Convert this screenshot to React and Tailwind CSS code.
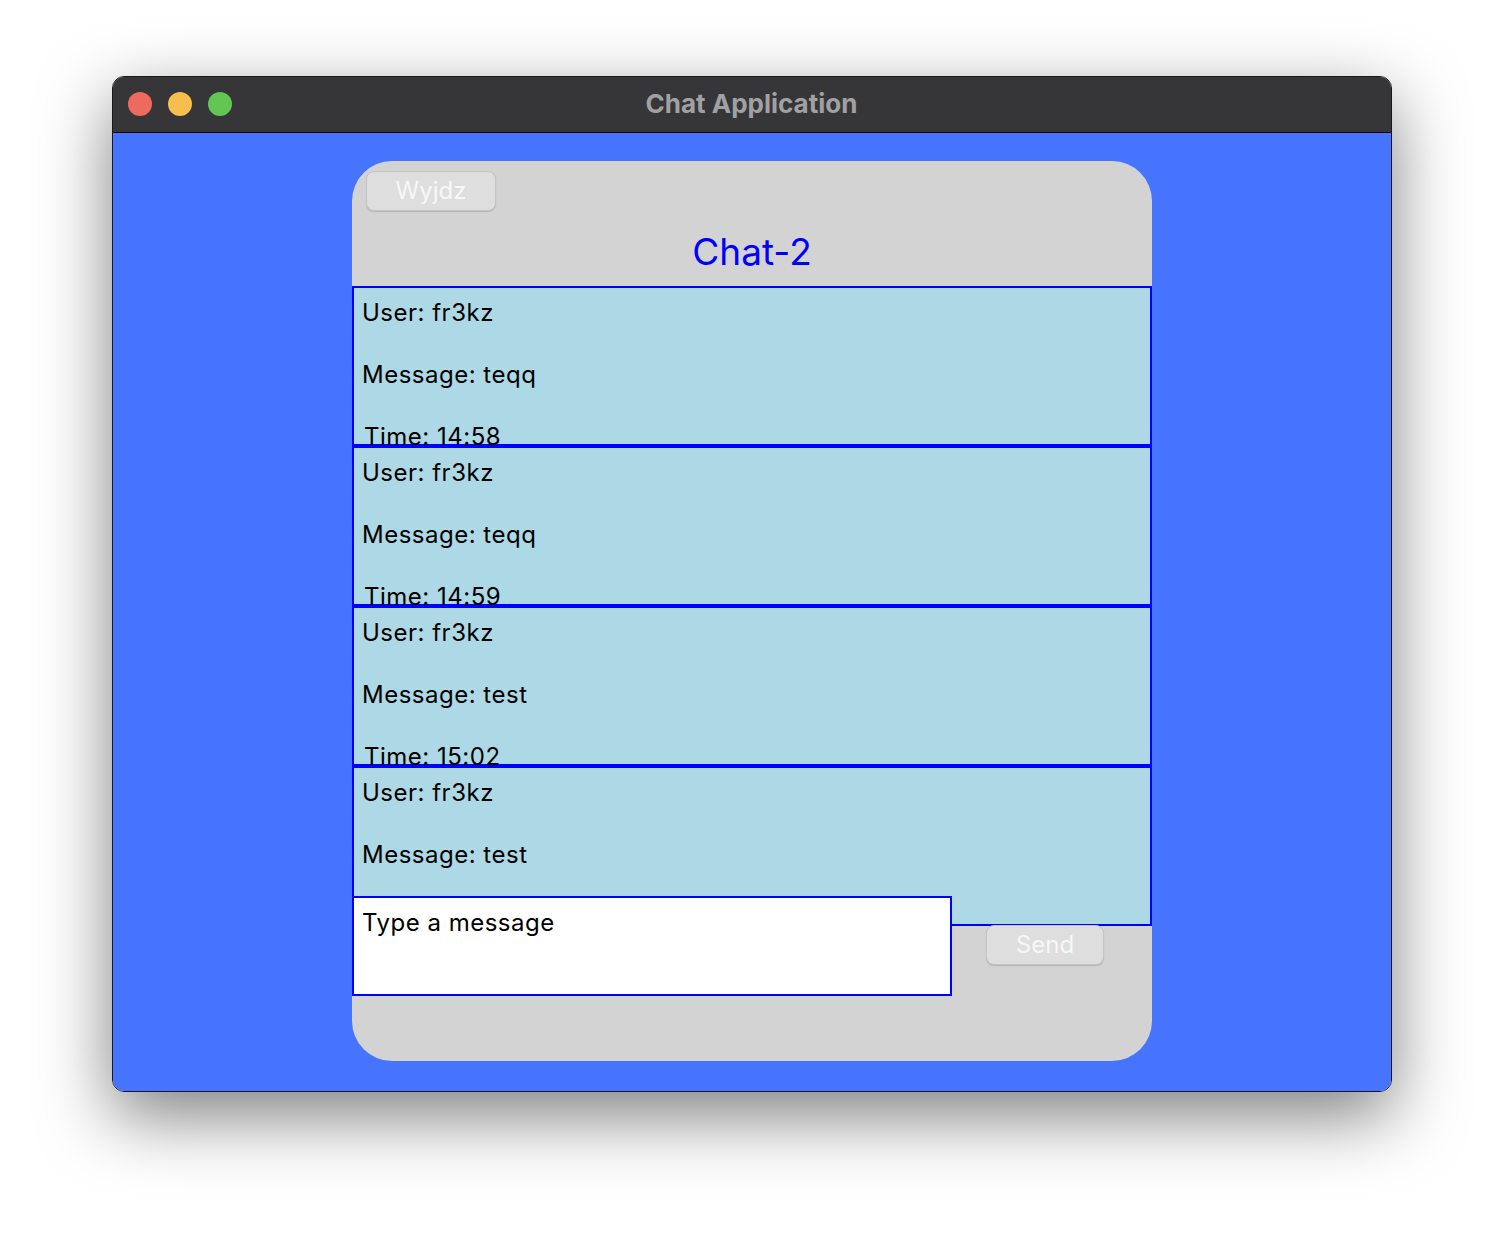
import React from "react";

const messages = [
  { user: "fr3kz", text: "teqq", time: "14:58" },
  { user: "fr3kz", text: "teqq", time: "14:59" },
  { user: "fr3kz", text: "test", time: "15:02" },
  { user: "fr3kz", text: "test" },
];

export default function App() {
  return (
    <div className="w-[1504px] h-[1240px] bg-white pt-[76px] pl-[112px] font-['Inter',sans-serif]">
      <div className="w-[1280px] h-[1016px] rounded-[12px] overflow-hidden border border-[#1a1a1a] shadow-[0_24px_70px_rgba(0,0,0,0.5)] flex flex-col">
        {/* title bar */}
        <div className="h-[56px] bg-[#363638] border-b border-black flex items-center relative shrink-0">
          <div className="flex items-center gap-[16px] pl-[15px] pb-[2px]">
            <span className="w-[24px] h-[24px] rounded-full bg-[#ee6a5f]" />
            <span className="w-[24px] h-[24px] rounded-full bg-[#f5be4f]" />
            <span className="w-[24px] h-[24px] rounded-full bg-[#62c554]" />
          </div>
          <div className="flex-1 text-center pr-[120px] pb-[3px] text-[26px] font-bold text-[#a1a1a3]">
            Chat Application
          </div>
        </div>

        {/* content */}
        <div className="flex-1 bg-[#4674ff] pt-[28px]">
          <div className="w-[800px] h-[900px] mx-auto rounded-[40px] bg-[#d3d3d3] flex flex-col">
            <div className="pl-[14px] pt-[10px]">
              <button className="w-[130px] h-[40px] rounded-[8px] bg-[#dedede] border border-[#c4c4c4] shadow-[0_1px_1px_rgba(0,0,0,0.15)] text-[24px] text-[#f7f7f7]">
                Wyjdz
              </button>
            </div>
            <h1 className="h-[75px] flex items-center justify-center pt-[6px] text-[37px] text-[#0000ff]">
              Chat-2
            </h1>

            <div className="flex flex-col">
              {messages.map((m, i) => (
                <div
                  key={i}
                  className="relative h-[160px] border-2 border-[#0000ff] bg-[#add8e6] px-[8px] pt-[10px] flex flex-col gap-[33px] text-[24px] leading-[29px] tracking-[0.5px] text-black"
                >
                  <p>User: {m.user}</p>
                  <p>Message: {m.text}</p>
                  {m.time && <p className="pl-[2px]">Time: {m.time}</p>}
                </div>
              ))}
            </div>

            <div className="relative -mt-[30px] flex items-start">
              <div className="w-[600px] h-[100px] bg-white border-2 border-[#0000ff] px-[8px] pt-[10px] text-[24px] leading-[29px] tracking-[0.5px] text-black">
                Type a message
              </div>
              <button className="ml-[34px] mt-[29px] w-[118px] h-[40px] rounded-[8px] bg-[#dedede] border border-[#c4c4c4] shadow-[0_1px_1px_rgba(0,0,0,0.15)] text-[24px] text-[#f7f7f7]">
                Send
              </button>
            </div>
          </div>
        </div>
      </div>
    </div>
  );
}
